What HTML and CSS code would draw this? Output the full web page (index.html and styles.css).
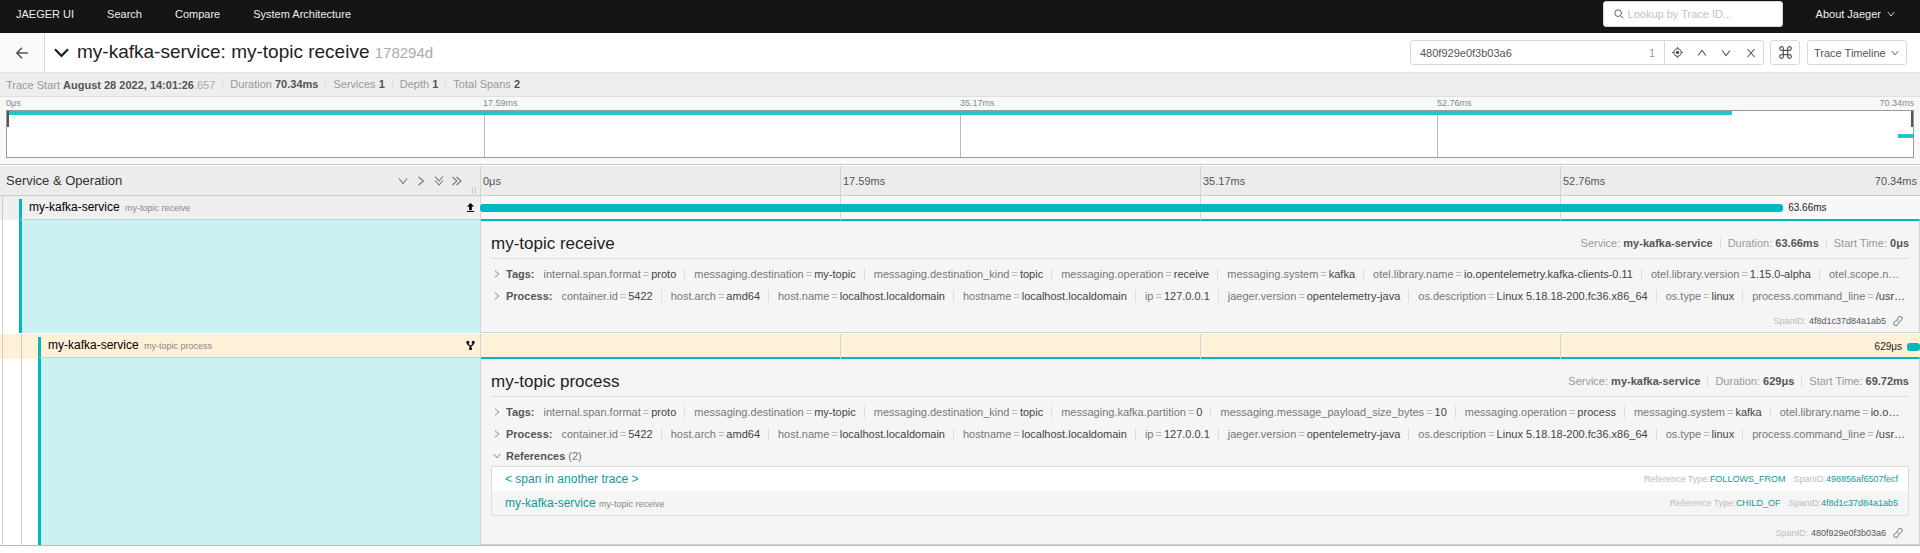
FILE: index.html
```html
<!DOCTYPE html>
<html lang="en">
<head>
    <meta charset="UTF-8">
    <meta name="viewport" content="width=device-width, initial-scale=1.0">
    <title>Jaeger UI</title>
    <link rel="stylesheet" href="styles.css">
</head>
<body>
    <svg class="sprite" aria-hidden="true">
        <symbol id="down" viewBox="0 0 10 10"><path d="M1 2.5l4 5 4-5" /></symbol>
        <symbol id="up" viewBox="0 0 10 10"><path d="M1 7.5l4-5 4 5" /></symbol>
        <symbol id="right" viewBox="0 0 10 10"><path d="M2.5 1l5 4-5 4" /></symbol>
        <symbol id="double-down" viewBox="0 0 10 10"><path d="M1 .5l4 4.5 4-4.5M1 4.5L5 9l4-4.5" /></symbol>
        <symbol id="double-right" viewBox="0 0 10 10"><path d="M.5 1L5 5 .5 9M4.5 1L9 5 4.5 9" /></symbol>
        <symbol id="link" viewBox="0 0 12 12"><path d="M5 3.2l2-2a2.3 2.3 0 0 1 3.4 3.4L8.2 6.8a2.3 2.3 0 0 1-2.6.4M7 8.8l-2 2a2.3 2.3 0 0 1-3.4-3.4l2.2-2.2a2.3 2.3 0 0 1 2.6-.4" /></symbol>
    </svg>

    <nav class="navbar">
        <a class="nav-link" href="#">JAEGER UI</a>
        <a class="nav-link" href="#">Search</a>
        <a class="nav-link" href="#">Compare</a>
        <a class="nav-link" href="#">System Architecture</a>
        <label class="lookup">
            <svg class="icon" viewBox="0 0 12 12"><circle cx="5" cy="5" r="4" /><path d="M8 8l3 3" /></svg>
            <input type="text" placeholder="Lookup by Trace ID..." aria-label="Lookup by Trace ID">
        </label>
        <button class="about">About Jaeger <svg class="icon small"><use href="#down" /></svg></button>
    </nav>

    <header class="trace-header">
        <a class="back" href="#" aria-label="Back">
            <svg class="icon" viewBox="0 0 12 12"><path d="M6 .8L.9 6 6 11.2M1 6h11" /></svg>
        </a>
        <button class="title-toggle" aria-label="Collapse header">
            <svg viewBox="0 0 16 10"><path d="M1 1l7 7 7-7" /></svg>
        </button>
        <h1>my-kafka-service: my-topic receive <small>178294d</small></h1>
        <div class="search-group">
            <div class="search-box">
                <input type="text" value="480f929e0f3b03a6" aria-label="Find">
                <span class="count">1</span>
            </div>
            <div class="search-buttons">
                <button aria-label="Locate"><svg class="icon target" viewBox="0 0 12 12"><circle cx="6" cy="6" r="4" /><circle class="dot" cx="6" cy="6" r="2" /><path d="M6 0v2M6 10v2M0 6h2M10 6h2" /></svg></button>
                <button aria-label="Previous"><svg class="icon"><use href="#up" /></svg></button>
                <button aria-label="Next"><svg class="icon"><use href="#down" /></svg></button>
                <button aria-label="Clear"><svg class="icon" viewBox="0 0 10 10"><path d="M1.5 1l7 8M8.5 1l-7 8" /></svg></button>
            </div>
        </div>
        <button class="shortcuts" aria-label="Keyboard shortcuts">
            <svg class="icon" viewBox="0 0 12 12"><path d="M4 4V2.3A1.7 1.7 0 1 0 2.3 4h7.4A1.7 1.7 0 1 0 8 2.3v7.4A1.7 1.7 0 1 0 9.7 8H2.3A1.7 1.7 0 1 0 4 9.7z" /></svg>
        </button>
        <div class="view-select">
            <select aria-label="View"><option>Trace Timeline</option></select>
            <svg class="icon small"><use href="#down" /></svg>
        </div>
    </header>

    <ul class="summary">
        <li>Trace Start <b>August 28 2022, 14:01:26</b><span class="ms">.657</span></li>
        <li>Duration <b>70.34ms</b></li>
        <li>Services <b>1</b></li>
        <li>Depth <b>1</b></li>
        <li>Total Spans <b>2</b></li>
    </ul>

    <section class="overview">
        <div class="overview-labels">
            <span>0μs</span>
            <span>17.59ms</span>
            <span>35.17ms</span>
            <span class="last"><span>52.76ms</span><span>70.34ms</span></span>
        </div>
        <div class="minimap">
            <span class="tick"></span><span class="tick"></span><span class="tick"></span><span class="tick"></span>
            <div class="minimap-spans">
                <div class="mini-bar" style="width: 90.5%"></div>
                <div class="mini-bar" style="width: 0.8%; margin-left: 99.2%"></div>
            </div>
            <i class="handle start"></i>
            <i class="handle end"></i>
        </div>
    </section>

    <main class="timeline">
        <div class="row head">
            <div class="name-col">
                <h2>Service &amp; Operation</h2>
                <button aria-label="Collapse all"><svg class="icon"><use href="#down" /></svg></button>
                <button aria-label="Expand +1"><svg class="icon"><use href="#right" /></svg></button>
                <button aria-label="Collapse +1"><svg class="icon"><use href="#double-down" /></svg></button>
                <button aria-label="Expand all"><svg class="icon"><use href="#double-right" /></svg></button>
                <i class="grip"></i>
            </div>
            <div class="time-col">
                <span class="tick">0μs</span>
                <span class="tick">17.59ms</span>
                <span class="tick">35.17ms</span>
                <span class="tick last"><span>52.76ms</span><span>70.34ms</span></span>
            </div>
        </div>

        <div class="row span-row">
            <div class="name-col">
                <i class="guide"></i>
                <div class="span-name">
                    <a href="#">my-kafka-service <small>my-topic receive</small></a>
                    <svg class="ref-icon" viewBox="0 0 10 10"><path d="M5 0l4 4H6.5v4h-3V4H1zM1 9h8v1H1z" /></svg>
                </div>
            </div>
            <div class="time-col">
                <span class="tick"></span><span class="tick"></span><span class="tick"></span><span class="tick"></span>
                <div class="bar-wrap">
                    <div class="bar" style="width: 90.5%"></div>
                    <span>63.66ms</span>
                </div>
            </div>
        </div>
        <div class="row detail-row">
            <div class="name-col">
                <i class="guide"></i>
                <div class="fill"></div>
            </div>
            <article class="detail">
                <div class="detail-head">
                    <h3>my-topic receive</h3>
                    <ul class="facts">
                        <li>Service: <b>my-kafka-service</b></li>
                        <li>Duration: <b>63.66ms</b></li>
                        <li>Start Time: <b>0μs</b></li>
                    </ul>
                </div>
                <button class="tags">
                    <svg class="icon small"><use href="#right" /></svg><b>Tags:</b>
                    <span class="tag">internal.span.format<i>=</i><em>proto</em></span>
                    <span class="tag">messaging.destination<i>=</i><em>my-topic</em></span>
                    <span class="tag">messaging.destination_kind<i>=</i><em>topic</em></span>
                    <span class="tag">messaging.operation<i>=</i><em>receive</em></span>
                    <span class="tag">messaging.system<i>=</i><em>kafka</em></span>
                    <span class="tag">otel.library.name<i>=</i><em>io.opentelemetry.kafka-clients-0.11</em></span>
                    <span class="tag">otel.library.version<i>=</i><em>1.15.0-alpha</em></span>
                    <span class="tag">otel.scope.n…</span>
                </button>
                <button class="tags">
                    <svg class="icon small"><use href="#right" /></svg><b>Process:</b>
                    <span class="tag">container.id<i>=</i><em>5422</em></span>
                    <span class="tag">host.arch<i>=</i><em>amd64</em></span>
                    <span class="tag">host.name<i>=</i><em>localhost.localdomain</em></span>
                    <span class="tag">hostname<i>=</i><em>localhost.localdomain</em></span>
                    <span class="tag">ip<i>=</i><em>127.0.0.1</em></span>
                    <span class="tag">jaeger.version<i>=</i><em>opentelemetry-java</em></span>
                    <span class="tag">os.description<i>=</i><em>Linux 5.18.18-200.fc36.x86_64</em></span>
                    <span class="tag">os.type<i>=</i><em>linux</em></span>
                    <span class="tag">process.command_line<i>=</i><em>/usr…</em></span>
                </button>
                <div class="span-id">
                    <span>SpanID:</span> 4f8d1c37d84a1ab5
                    <a href="#" aria-label="Copy link"><svg class="icon"><use href="#link" /></svg></a>
                </div>
            </article>
        </div>

        <div class="row span-row match">
            <div class="name-col">
                <i class="guide"></i>
                <i class="guide"></i>
                <div class="span-name">
                    <a href="#">my-kafka-service <small>my-topic process</small></a>
                    <svg class="ref-icon fork" viewBox="0 0 10 10"><path d="M2 2v1.5L5 6l3-2.500V2M5 6v3" /><circle cx="2" cy="1.5" r="1" /><circle cx="8" cy="1.5" r="1" /><circle cx="5" cy="8.5" r="1" /></svg>
                </div>
            </div>
            <div class="time-col">
                <span class="tick"></span><span class="tick"></span><span class="tick"></span><span class="tick"></span>
                <div class="bar-wrap end">
                    <span>629μs</span>
                    <div class="bar" style="width: 0.9%"></div>
                </div>
            </div>
        </div>
        <div class="row detail-row">
            <div class="name-col">
                <i class="guide"></i>
                <i class="guide"></i>
                <div class="fill"></div>
            </div>
            <article class="detail">
                <div class="detail-head">
                    <h3>my-topic process</h3>
                    <ul class="facts">
                        <li>Service: <b>my-kafka-service</b></li>
                        <li>Duration: <b>629μs</b></li>
                        <li>Start Time: <b>69.72ms</b></li>
                    </ul>
                </div>
                <button class="tags">
                    <svg class="icon small"><use href="#right" /></svg><b>Tags:</b>
                    <span class="tag">internal.span.format<i>=</i><em>proto</em></span>
                    <span class="tag">messaging.destination<i>=</i><em>my-topic</em></span>
                    <span class="tag">messaging.destination_kind<i>=</i><em>topic</em></span>
                    <span class="tag">messaging.kafka.partition<i>=</i><em>0</em></span>
                    <span class="tag">messaging.message_payload_size_bytes<i>=</i><em>10</em></span>
                    <span class="tag">messaging.operation<i>=</i><em>process</em></span>
                    <span class="tag">messaging.system<i>=</i><em>kafka</em></span>
                    <span class="tag">otel.library.name<i>=</i><em>io.o…</em></span>
                </button>
                <button class="tags">
                    <svg class="icon small"><use href="#right" /></svg><b>Process:</b>
                    <span class="tag">container.id<i>=</i><em>5422</em></span>
                    <span class="tag">host.arch<i>=</i><em>amd64</em></span>
                    <span class="tag">host.name<i>=</i><em>localhost.localdomain</em></span>
                    <span class="tag">hostname<i>=</i><em>localhost.localdomain</em></span>
                    <span class="tag">ip<i>=</i><em>127.0.0.1</em></span>
                    <span class="tag">jaeger.version<i>=</i><em>opentelemetry-java</em></span>
                    <span class="tag">os.description<i>=</i><em>Linux 5.18.18-200.fc36.x86_64</em></span>
                    <span class="tag">os.type<i>=</i><em>linux</em></span>
                    <span class="tag">process.command_line<i>=</i><em>/usr…</em></span>
                </button>
                <button class="tags open">
                    <svg class="icon small"><use href="#down" /></svg><b>References</b> <span>(2)</span>
                </button>
                <ul class="references">
                    <li>
                        <a class="ref-name" href="#">&lt; span in another trace &gt;</a>
                        <span>Reference Type:<a href="#">FOLLOWS_FROM</a></span>
                        <span>SpanID:<a href="#">498856af6507fecf</a></span>
                    </li>
                    <li>
                        <a class="ref-name" href="#">my-kafka-service <small>my-topic receive</small></a>
                        <span>Reference Type:<a href="#">CHILD_OF</a></span>
                        <span>SpanID:<a href="#">4f8d1c37d84a1ab5</a></span>
                    </li>
                </ul>
                <div class="span-id">
                    <span>SpanID:</span> 480f929e0f3b03a6
                    <a href="#" aria-label="Copy link"><svg class="icon"><use href="#link" /></svg></a>
                </div>
            </article>
        </div>
    </main>
</body>
</html>
```
FILE: styles.css
```css
* {
    box-sizing: border-box;
}

body {
    margin: 0;
    font-family: "Liberation Sans", Arial, sans-serif;
    font-size: 11px;
    line-height: 16px;
    color: #555;
    background: #fff;
}

h1, h2, h3, ul {
    margin: 0;
    padding: 0;
    font-weight: normal;
    list-style: none;
}

a {
    color: inherit;
    text-decoration: none;
}

button, input, select {
    margin: 0;
    padding: 0;
    border: none;
    background: none;
    font: inherit;
    color: inherit;
    outline: none;
}

i, em {
    font-style: normal;
}

.sprite {
    display: none;
}

.icon {
    display: block;
    width: 10px;
    height: 10px;
    fill: none;
    stroke: currentColor;
    stroke-width: 1.1;
    flex: none;
}

.icon.small {
    width: 8px;
    height: 8px;
}

/* top nav */
.navbar {
    display: flex;
    align-items: center;
    height: 33px;
    padding: 0 25px 5px 16px;
    background: #151515;
    color: #eee;
}

.nav-link {
    margin-right: 33px;
}

.lookup {
    display: flex;
    align-items: center;
    gap: 4px;
    width: 180px;
    height: 26px;
    margin-left: auto;
    padding: 0 10px;
    border: 1px solid #d9d9d9;
    border-radius: 3px;
    background: #fff;
    color: #555;
}

.lookup input {
    flex: 1;
    min-width: 0;
}

.lookup input::placeholder {
    color: #bfbfbf;
}

.about {
    display: flex;
    align-items: center;
    gap: 6px;
    margin-left: 33px;
}

/* trace title and search */
.trace-header {
    display: flex;
    align-items: center;
    height: 40px;
    padding-right: 13px;
    border-bottom: 1px solid #e4e4e4;
}

.back {
    display: flex;
    align-items: center;
    justify-content: center;
    align-self: stretch;
    width: 45px;
    border-right: 1px solid #d8d8d8;
    background: #fafafa;
}

.back .icon {
    width: 12px;
    height: 12px;
    stroke-width: 1.6;
}

.title-toggle {
    display: flex;
    margin: 0 8px 0 9px;
}

.title-toggle svg {
    width: 15px;
    height: 10px;
    fill: none;
    stroke: #222;
    stroke-width: 2.4;
}

h1 {
    flex: 1;
    font-size: 19px;
    line-height: 38px;
    color: #222;
}

h1 small {
    font-size: 15px;
    color: #aaa;
}

.search-group {
    display: flex;
    width: 354px;
    height: 25px;
    border: 1px solid #d9d9d9;
    border-radius: 3px;
}

.search-box {
    display: flex;
    align-items: center;
    flex: 1;
    padding: 0 9px;
    border-right: 1px solid #d9d9d9;
}

.search-box input {
    flex: 1;
    min-width: 0;
}

.count {
    color: #999;
}

.search-buttons {
    display: flex;
    width: 98px;
}

.search-buttons button {
    display: flex;
    flex: 1;
    align-items: center;
    justify-content: center;
}

.icon.target {
    width: 11px;
    height: 11px;
}

.target .dot {
    fill: currentColor;
    stroke: none;
}

.shortcuts {
    display: flex;
    align-items: center;
    justify-content: center;
    width: 30px;
    height: 25px;
    margin: 0 7px 0 6px;
    border: 1px solid #d9d9d9;
    border-radius: 3px;
}

.shortcuts .icon {
    width: 13px;
    height: 13px;
}

.view-select {
    display: grid;
    align-items: center;
    width: 100px;
    height: 25px;
    border: 1px solid #d9d9d9;
    border-radius: 3px;
}

.view-select select,
.view-select .icon {
    grid-area: 1 / 1;
}

.view-select select {
    appearance: none;
    height: 23px;
    padding-left: 6px;
}

.view-select .icon {
    justify-self: end;
    margin-right: 7px;
    pointer-events: none;
}

/* summary strip */
.summary {
    display: flex;
    align-items: center;
    height: 24px;
    padding-left: 6px;
    border-bottom: 1px solid #e0e0e0;
    background: #eee;
    color: #999;
}

.summary li + li,
.facts li + li {
    margin-left: 7px;
    padding-left: 7px;
    border-left: 1px solid #ddd;
    line-height: 11px;
}

.summary b,
.facts b {
    color: #555;
}

.summary .ms {
    color: #aaa;
}

/* minimap */
.overview {
    padding: 0 6px 6px;
    border-bottom: 1px solid #ccc;
    background: #f8f8f8;
}

.overview-labels {
    display: grid;
    grid-template-columns: repeat(4, 1fr);
    height: 13px;
    font-size: 9px;
    line-height: 13px;
    color: #888;
}

.last {
    display: flex;
    justify-content: space-between;
}

.minimap {
    position: relative;
    display: grid;
    grid-template-columns: repeat(4, 1fr);
    height: 48px;
    border: 1px solid #999;
    background: #fff;
}

.minimap .tick + .tick {
    border-left: 1px solid #bbb;
}

.minimap-spans {
    position: absolute;
    inset: 0;
}

.mini-bar {
    height: 4px;
    margin-bottom: 19px;
    background: #20c7cc;
}

.handle {
    position: absolute;
    top: 0;
    width: 2px;
    height: 16px;
    background: #555;
}

.handle.start {
    left: 0;
}

.handle.end {
    right: 0;
}

/* timeline */
.timeline {
    margin-top: 1px;
    border-bottom: 1px solid #bbb;
}

.row {
    display: grid;
    grid-template-columns: 25% 75%;
}

.name-col {
    display: flex;
    min-width: 0;
}

.time-col {
    position: relative;
    display: grid;
    grid-template-columns: repeat(4, 1fr);
}

.time-col .tick {
    border-left: 1px solid #d4d4d4;
}

.head {
    height: 30px;
    border-bottom: 1px solid #ccc;
    background: #ececec;
    line-height: 30px;
}

.head .name-col {
    align-items: center;
    gap: 8px;
    padding: 0 4px 0 6px;
    color: #777;
}

.head h2 {
    flex: 1;
    font-size: 13px;
    color: #333;
}

.head .grip {
    align-self: flex-end;
    width: 4px;
    height: 7px;
    margin: 0 0 2px 2px;
    border: 1px solid #ccc;
    border-width: 0 1px;
}

.head .tick {
    padding: 0 3px 0 2px;
}

.guide {
    width: 17px;
    border-left: 1px solid #ccc;
}

.guide:has(+ .guide) {
    width: 19px;
}

.span-row .name-col,
.detail-row .name-col {
    padding-left: 2px;
}

.span-row {
    height: 23px;
    background: #f8f8f8;
}

.span-row .name-col {
    background: #efefef;
}

.span-row.match {
    height: 24px;
    border-top: 1px solid #fff;
}

.match, .match .name-col {
    background: #fff0d8;
}

.span-name {
    display: flex;
    flex: 1;
    align-items: center;
    justify-content: space-between;
    margin-top: 3px;
    padding: 0 5px 4px 7px;
    border-left: 3px solid #00b8c0;
    font-size: 12px;
    color: #000;
}

.match .span-name {
    padding-bottom: 5px;
}

small {
    font-size: 9px;
    color: #888;
}

.span-name small {
    margin-left: 2px;
}

.ref-icon {
    width: 9px;
    height: 9px;
}

.fork {
    fill: none;
    stroke: #000;
    stroke-width: 1.4;
}

.bar-wrap {
    position: absolute;
    inset: 0;
    display: flex;
    align-items: center;
    gap: 5px;
    font-size: 10px;
    color: #222;
}

.bar-wrap.end {
    justify-content: flex-end;
}

.bar {
    height: 8px;
    border-radius: 3px;
    background: #00b8c0;
}

.detail-row .fill {
    flex: 1;
    border-top: 1px solid #b0dcde;
    border-left: 3px solid #00b8c0;
    background: #cbf1f2;
}

.detail {
    min-width: 0;
    padding: 8px 10px 0;
    border: 1px solid #d3d3d3;
    border-top: 2px solid #00b8c0;
    background: #f5f5f5;
}

.detail-head {
    display: flex;
    align-items: center;
    justify-content: space-between;
    height: 30px;
    margin-bottom: 4px;
    border-bottom: 1px solid #ddd;
}

.detail-head h3 {
    font-size: 17px;
    color: #222;
}

.facts {
    display: flex;
    color: #999;
}

.facts li {
    line-height: 11px;
}

.tags {
    display: flex;
    align-items: center;
    width: 100%;
    height: 22px;
    overflow: hidden;
    white-space: nowrap;
    color: #777;
}

.tags .icon {
    margin: 0 5px 0 2px;
}

.tags b {
    margin: 0 9px 0 0;
    color: #555;
}

.tag + .tag {
    margin-left: 8px;
    padding-left: 9px;
    border-left: 1px solid #ddd;
    line-height: 12px;
}

.tag i {
    padding: 0 2px;
    color: #bbb;
}

.tag em {
    color: #444;
}

.tags.open {
    height: 21px;
}

.tags.open b {
    margin-right: 3px;
}

.references {
    margin-bottom: 6px;
    border: 1px solid #ddd;
}

.references li {
    display: flex;
    align-items: center;
    gap: 8px;
    height: 24px;
    padding: 0 10px 0 13px;
    font-size: 9px;
    color: #bbb;
}

.references li:first-child {
    background: #fff;
}

.references a {
    color: #119999;
}

.references .ref-name {
    flex: 1;
    font-size: 12px;
}

.span-id {
    display: flex;
    align-items: center;
    justify-content: flex-end;
    gap: 3px;
    height: 22px;
    margin-top: 3px;
    padding-right: 6px;
    font-size: 9px;
}

.span-id span {
    color: #bbb;
}

.span-id a {
    margin-left: 4px;
}
```
